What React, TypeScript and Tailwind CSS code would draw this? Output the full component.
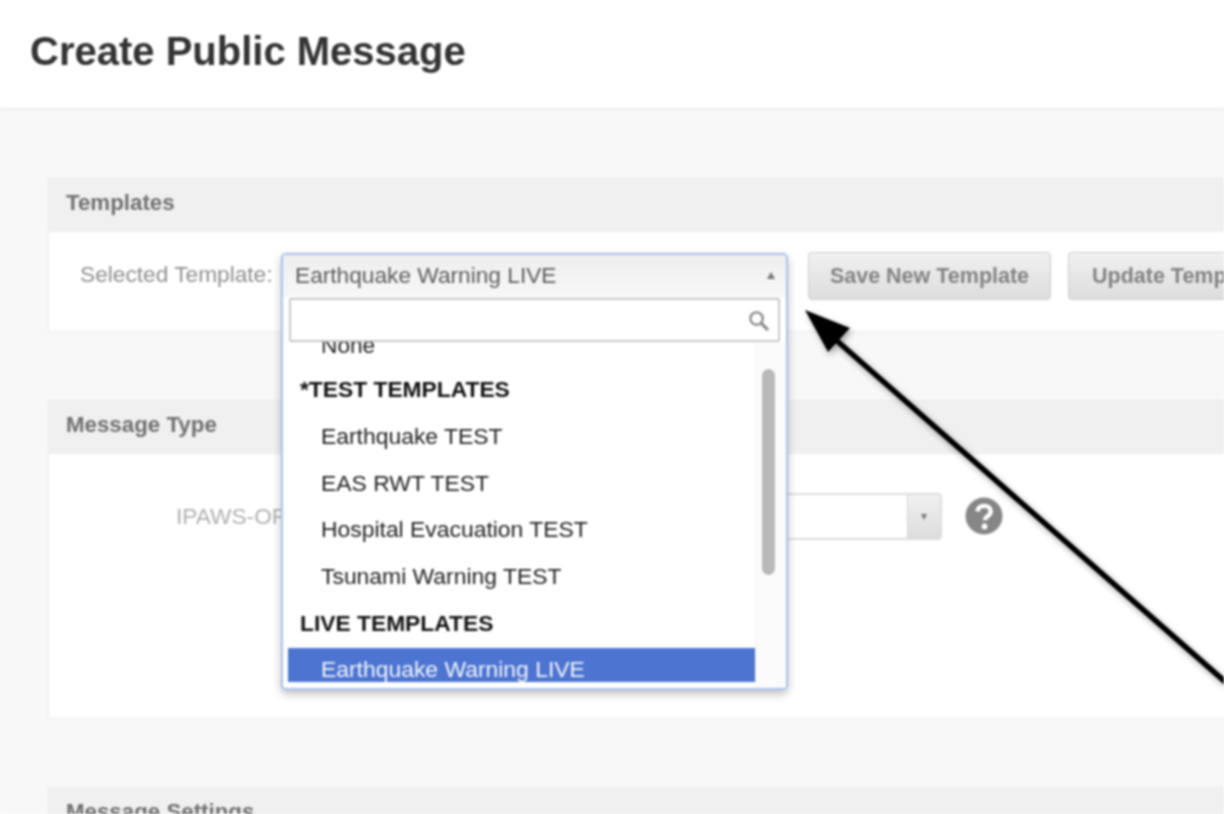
import React from "react";

const items: { label: string; kind: "group" | "item" | "selected" }[] = [
  { label: "*TEST TEMPLATES", kind: "group" },
  { label: "Earthquake TEST", kind: "item" },
  { label: "EAS RWT TEST", kind: "item" },
  { label: "Hospital Evacuation TEST", kind: "item" },
  { label: "Tsunami Warning TEST", kind: "item" },
  { label: "LIVE TEMPLATES", kind: "group" },
  { label: "Earthquake Warning LIVE", kind: "selected" },
];

function Panel({ title, bodyClass, children }: { title: string; bodyClass: string; children?: React.ReactNode }) {
  return (
    <section className="w-[1300px] border border-[#ececec] bg-white shrink-0">
      <h2 className="h-[53px] flex items-center pl-[17px] pb-[4px] bg-[#f0f0f0] border-b border-[#ececec] text-[#6f6f6f] text-[22.3px] font-bold">
        {title}
      </h2>
      <div className={bodyClass}>{children}</div>
    </section>
  );
}

function Dropdown() {
  return (
    <div className="relative w-[507px] h-[48px] shrink-0">
      <div className="absolute left-0 top-[1px] z-10 w-[507px] h-[437px] flex flex-col bg-white border-2 border-[#a9c3ee] rounded-[5px] shadow-[0_4px_8px_rgba(0,0,0,0.25)] overflow-hidden">
        <div className="h-[43px] shrink-0 flex items-center justify-between pl-[12px] pr-[11px] pb-[3px] bg-gradient-to-b from-[#eeeeee] to-[#f8f8f8] text-[#5c5c5c] text-[22.7px]">
          <span>Earthquake Warning LIVE</span>
          <span className="w-0 h-0 border-x-[4px] border-x-transparent border-b-[7px] border-b-[#777]" />
        </div>
        <div className="h-[44px] shrink-0 mx-[6px] flex items-center justify-end pr-[8px] bg-white border-2 border-[#c9c9c9] rounded-[2px]">
          <svg width="23" height="23" viewBox="0 0 24 24" fill="none" stroke="#8a8a8a" strokeLinecap="round">
            <circle cx="10" cy="10" r="6.5" strokeWidth="2.4" />
            <path d="M15 15l6 6" strokeWidth="3.2" />
          </svg>
        </div>
        <div className="flex-1 min-h-0 flex">
          <div className="w-[472px] pl-[5px] pb-[6px] flex flex-col">
            <div className="flex-1 min-h-0 overflow-hidden">
              <div className="h-[34px] -mt-[14px] flex items-center pl-[33px] text-[#222] text-[22.7px]">None</div>
              <ul className="mt-[6px]">
                {items.map((it) => (
                  <li
                    key={it.label}
                    className={
                      it.kind === "group"
                        ? "h-[46.7px] flex items-center pl-[12px] pb-[4px] font-bold text-[#111] text-[22.8px]"
                        : it.kind === "selected"
                        ? "h-[46.7px] flex items-center pl-[33px] pb-[4px] bg-[#4c74d0] text-[#f2f5fc] text-[22.9px]"
                        : "h-[46.7px] flex items-center pl-[33px] pb-[4px] text-[#222] text-[22.9px]"
                    }
                  >
                    {it.label}
                  </li>
                ))}
              </ul>
            </div>
          </div>
          <div className="flex-1 border-l border-[#f0f0f3] bg-[#fbfbfc] pt-[27px] pl-[6px]">
            <div className="w-[13px] h-[206px] rounded-full bg-[#b9b9bd]" />
          </div>
        </div>
      </div>
    </div>
  );
}

export default function App() {
  return (
    <div className="relative h-[814px] w-[1224px] overflow-hidden bg-[#f8f8f9] font-['Liberation_Sans',Arial,sans-serif] blur-[0.8px]">
      <header className="h-[110px] bg-white border-b-2 border-[#eeeeee] flex items-center pl-[30px] pb-[6px]">
        <h1 className="text-[40px] font-bold text-[#333]">Create Public Message</h1>
      </header>
      <main className="pl-[48px] pt-[68px] flex flex-col gap-[68px]">
        <Panel title="Templates" bodyClass="h-[99px] flex items-start pt-[20px] pl-[31px]">
          <span className="w-[201px] h-[44px] flex items-center text-[#8f8f8f] text-[22.7px]">Selected Template:</span>
          <Dropdown />
          <button className="ml-[20px] w-[243px] h-[48px] shrink-0 rounded-[4px] border border-[#cccccc] bg-gradient-to-b from-[#f1f1f1] to-[#dddddd] text-[#828282] text-[21.5px] font-bold">
            Save New Template
          </button>
          <button className="ml-[17px] w-[243px] h-[48px] shrink-0 rounded-[4px] border border-[#cccccc] bg-gradient-to-b from-[#f1f1f1] to-[#dddddd] text-[#828282] text-[21.5px] font-bold text-left pl-[23px]">
            Update Template
          </button>
        </Panel>
        <Panel title="Message Type" bodyClass="h-[264px] flex items-start pt-[39px] pl-[127px]">
          <span className="w-[140px] h-[47px] flex items-center text-[#b0b0b0] text-[22.7px] whitespace-nowrap">IPAWS-OPEN:</span>
          <div className="w-[559px] ml-[67px] h-[47px] flex justify-end border-2 border-[#dddddd] rounded-[4px] bg-white overflow-hidden">
            <span className="w-[33px] flex items-center justify-center border-l border-[#d5d5d5] bg-gradient-to-b from-[#f1f1f1] to-[#dddddd]">
              <span className="w-0 h-0 border-x-[3.5px] border-x-transparent border-t-[6px] border-t-[#777]" />
            </span>
          </div>
          <svg className="ml-[23px] mt-[4px] shrink-0" width="38" height="38" viewBox="0 0 38 38" fill="none">
            <circle cx="19" cy="19" r="18.5" fill="#868686" />
            <path d="M12.5 14.5c.4-3.6 3-5.6 6.7-5.6 3.900 0 6.500 2.200 6.500 5.400 0 2.500-1.400 3.800-3.200 5-1.700 1.200-2.500 2-2.500 4" stroke="#fff" strokeWidth="4.400" />
            <circle cx="19.500" cy="29.500" r="2.900" fill="#fff" />
          </svg>
        </Panel>
        <Panel title="Message Settings" bodyClass="h-[100px]" />
      </main>
      <svg className="absolute left-0 top-0 pointer-events-none drop-shadow-[2px_3px_3px_rgba(0,0,0,0.35)]" width="1224" height="814" viewBox="0 0 1224 814">
        <path d="M836 340L1230 686" stroke="#000" strokeWidth="5.5" />
        <path d="M805 310L850 328L828 352Z" fill="#000" />
      </svg>
    </div>
  );
}
